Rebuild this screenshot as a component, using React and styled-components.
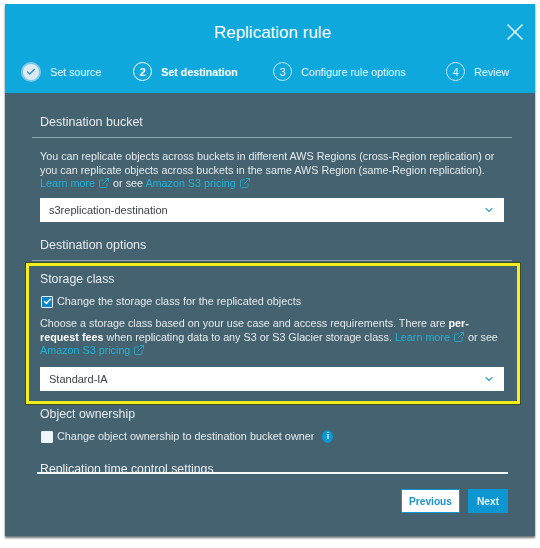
import React from "react";
import styled, { createGlobalStyle } from "styled-components";
import { Check, ChevronDown, ExternalLink, X } from "lucide-react";

const GlobalStyle = createGlobalStyle`
  html, body {
    margin: 0;
    padding: 0;
    background: #fff;
    font-family: "Liberation Sans", Arial, sans-serif;
  }
`;

const Page = styled.div`
  width: 540px;
  height: 548px;
  box-sizing: border-box;
  padding: 4px 5px 12px 5px;
`;

const Modal = styled.div`
  height: 100%;
  display: flex;
  flex-direction: column;
  background: #44626f;
  box-shadow: 0 2px 2px #6b7478;
  filter: blur(0.35px);
`;

const Header = styled.header`
  height: 89px;
  flex: none;
  position: relative;
  background: #0ea8dc;
  color: #fff;
`;

const Title = styled.h1`
  margin: 0;
  padding: 19px 0 0 5px;
  font-size: 17px;
  line-height: 20px;
  font-weight: 400;
  text-align: center;
`;

const CloseButton = styled.button`
  position: absolute;
  top: 14px;
  right: 6px;
  padding: 0;
  border: 0;
  display: flex;
  background: none;
  color: #e6f7fd;
`;

const Steps = styled.ol`
  display: flex;
  margin: 19px 0 0;
  padding: 0 0 0 16px;
  list-style: none;
`;

const Step = styled.li`
  width: ${(p) => p.$width}px;
  flex: none;
  display: flex;
  align-items: center;
  gap: 9px;
  font-size: 10.7px;
  font-weight: ${(p) => (p.$active ? 700 : 400)};
  color: ${(p) => (p.$active ? "#fff" : "#e2f5fc")};
`;

const StepNumber = styled.span`
  width: 19px;
  height: 19px;
  flex: none;
  display: flex;
  align-items: center;
  justify-content: center;
  box-sizing: border-box;
  border-radius: 50%;
  border: ${(p) => (p.$active ? "1.5px solid #fff" : "1px solid #bfeaf8")};
  font-size: 11px;
`;

const StepDone = styled.span`
  width: 16px;
  height: 16px;
  margin: 0 2px;
  flex: none;
  display: flex;
  align-items: center;
  justify-content: center;
  border-radius: 50%;
  background: #dcebf2;
  box-shadow: 0 0 0 2px #7fcbe9;
  color: #3f93bf;
`;

const Scroller = styled.div`
  height: 379px;
  flex: none;
  box-sizing: border-box;
  padding: 0 31px 0 35px;
  overflow: hidden;
  color: #e9eef0;
`;

const ScrollEnd = styled.div`
  height: 2px;
  flex: none;
  margin: 0 27px 0 32px;
  background: #f4f7f8;
`;

const SectionTitle = styled.h2`
  margin: 0 -8px 0 -8px;
  padding: ${(p) => p.$top}px 0 7px 8px;
  font-size: 12.5px;
  line-height: 15px;
  font-weight: 400;
  color: #e8edef;
  border-bottom: 1px solid #8fa5ad;
`;

const Paragraph = styled.p`
  margin: ${(p) => p.$top}px 0 0;
  font-size: 10.77px;
  line-height: 13.5px;
  color: #e6ebed;
  width: ${(p) => p.$width}px;
  b {
    color: #fff;
  }
`;

const Link = styled.a`
  color: #1cb4d8;
  white-space: nowrap;
  svg {
    margin-left: 3px;
    vertical-align: -2px;
  }
`;

const Select = styled.div`
  width: 464px;
  height: 24px;
  margin-top: ${(p) => p.$top}px;
  box-sizing: border-box;
  padding: 0 9px;
  display: flex;
  align-items: center;
  justify-content: space-between;
  background: #fff;
  color: #3b4143;
  font-size: 11px;
`;

const Highlight = styled.div`
  margin: 2px -16px 0 -14px;
  padding: 6px 13px 0 11px;
  height: 141px;
  box-sizing: border-box;
  border: 3px solid #f3ef1d;
  box-shadow: 0 0 0 1px #3d4a2e;
`;

const GroupTitle = styled.h3`
  margin: ${(p) => p.$top || 0}px 0 0;
  font-size: 12.3px;
  line-height: 14px;
  font-weight: 400;
  color: #e8edef;
`;

const CheckRow = styled.label`
  display: flex;
  align-items: center;
  gap: 4px;
  margin-top: ${(p) => p.$top}px;
  padding-left: 1px;
  font-size: 10.85px;
  line-height: 13px;
  color: #e6ebed;
`;

const Box = styled.span`
  width: 12px;
  height: 12px;
  box-sizing: border-box;
  flex: none;
  display: flex;
  align-items: center;
  justify-content: center;
  border-radius: 1px;
  background: ${(p) => (p.$checked ? "#0b84c4" : "#eef6f9")};
  border: 1px solid #e6f2f7;
  color: #fff;
`;

const InfoDot = styled.span`
  width: 11px;
  height: 13px;
  margin-left: 4px;
  display: inline-flex;
  align-items: center;
  justify-content: center;
  border-radius: 50%;
  background: #0b97d0;
  color: #d9f0f9;
  font-size: 9px;
  font-weight: 700;
`;

const Footer = styled.footer`
  display: flex;
  justify-content: flex-end;
  gap: 8px;
  padding: 15px 27px 0 0;
`;

const Button = styled.button`
  height: 24px;
  width: ${(p) => p.$width}px;
  padding: 0;
  border: 1px solid #0c97d2;
  background: ${(p) => (p.$primary ? "#0c97d2" : "#fff")};
  color: ${(p) => (p.$primary ? "#e4f5fb" : "#1b93c9")};
  font-family: inherit;
  font-size: 10.2px;
  font-weight: 700;
`;

const steps = [
  { label: "Set source", width: 112, done: true },
  { label: "Set destination", width: 140, active: true, number: 2 },
  { label: "Configure rule options", width: 173, number: 3 },
  { label: "Review", width: 80, number: 4 },
];

const External = () => <ExternalLink size={12} strokeWidth={1.6} />;

export default function App() {
  return (
    <Page>
      <GlobalStyle />
      <Modal>
        <Header>
          <Title>Replication rule</Title>
          <CloseButton aria-label="Close">
            <X size={28} strokeWidth={1.3} />
          </CloseButton>
          <Steps>
            {steps.map((s) => (
              <Step key={s.label} $width={s.width} $active={s.active}>
                {s.done ? (
                  <StepDone>
                    <Check size={10} strokeWidth={3.5} />
                  </StepDone>
                ) : (
                  <StepNumber $active={s.active}>{s.number}</StepNumber>
                )}
                {s.label}
              </Step>
            ))}
          </Steps>
        </Header>

        <Scroller>
          <SectionTitle $top={22}>Destination bucket</SectionTitle>
          <Paragraph $top={12} $width={464}>
            You can replicate objects across buckets in different AWS Regions (cross-Region replication) or
            you can replicate objects across buckets in the same AWS Region (same-Region replication).{" "}
            <Link>
              Learn more
              <External />
            </Link>{" "}
            or see{" "}
            <Link>
              Amazon S3 pricing
              <External />
            </Link>
          </Paragraph>
          <Select $top={7.5}>
            s3replication-destination
            <ChevronDown size={12} color="#3c9dc4" strokeWidth={2.2} />
          </Select>

          <SectionTitle $top={16}>Destination options</SectionTitle>

          <Highlight>
            <GroupTitle>Storage class</GroupTitle>
            <CheckRow $top={9}>
              <Box $checked>
                <Check size={9} strokeWidth={4} />
              </Box>
              Change the storage class for the replicated objects
            </CheckRow>
            <Paragraph $top={9} $width={462}>
              Choose a storage class based on your use case and access requirements. There are{" "}
              <b>per-request fees</b> when replicating data to any S3 or S3 Glacier storage class.{" "}
              <Link>
                Learn more
                <External />
              </Link>{" "}
              or see{" "}
              <Link>
                Amazon S3 pricing
                <External />
              </Link>
            </Paragraph>
            <Select $top={9.5}>
              Standard-IA
              <ChevronDown size={12} color="#3c9dc4" strokeWidth={2.2} />
            </Select>
          </Highlight>

          <GroupTitle $top={3}>Object ownership</GroupTitle>
          <CheckRow $top={9}>
            <Box />
            Change object ownership to destination bucket owner
            <InfoDot>i</InfoDot>
          </CheckRow>
          <GroupTitle $top={19}>Replication time control settings</GroupTitle>
        </Scroller>
        <ScrollEnd />

        <Footer>
          <Button $width={59}>Previous</Button>
          <Button $width={40} $primary>
            Next
          </Button>
        </Footer>
      </Modal>
    </Page>
  );
}
